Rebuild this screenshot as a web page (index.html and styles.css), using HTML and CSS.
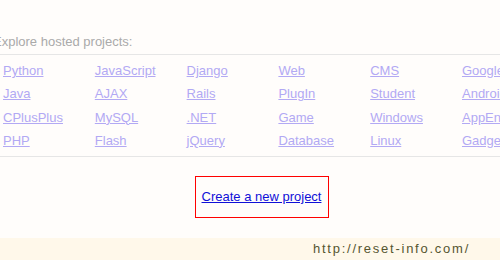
FILE: index.html
```html
<!DOCTYPE html>
<html lang="en">
<head>
    <meta charset="UTF-8">
    <title>Explore hosted projects</title>
    <link rel="stylesheet" href="styles.css">
</head>
<body>
<div class="page">
    <p class="explore">Explore hosted projects:</p>
    <ul class="labels">
        <li><a href="#">Python</a></li>
        <li><a href="#">JavaScript</a></li>
        <li><a href="#">Django</a></li>
        <li><a href="#">Web</a></li>
        <li><a href="#">CMS</a></li>
        <li><a href="#">Google</a></li>
        <li><a href="#">Java</a></li>
        <li><a href="#">AJAX</a></li>
        <li><a href="#">Rails</a></li>
        <li><a href="#">PlugIn</a></li>
        <li><a href="#">Student</a></li>
        <li><a href="#">Android</a></li>
        <li><a href="#">CPlusPlus</a></li>
        <li><a href="#">MySQL</a></li>
        <li><a href="#">.NET</a></li>
        <li><a href="#">Game</a></li>
        <li><a href="#">Windows</a></li>
        <li><a href="#">AppEngine</a></li>
        <li><a href="#">PHP</a></li>
        <li><a href="#">Flash</a></li>
        <li><a href="#">jQuery</a></li>
        <li><a href="#">Database</a></li>
        <li><a href="#">Linux</a></li>
        <li><a href="#">Gadget</a></li>
    </ul>
    <div class="create">
        <a href="#">Create a new project</a>
    </div>
</div>
<div class="footer">http://reset-info.com/</div>
</body>
</html>
```
FILE: styles.css
```css
*{
    margin: 0;
    padding: 0;
    list-style: none;
}

body{
    width: 500px;
    height: 260px;
    overflow: hidden;
    background-color: #fffdfb;
    font-family: "Liberation Sans", Arial, sans-serif;
    font-size: 13px;
}

.page{
    height: 238px;
    overflow: hidden;
}

.explore{
    color: #aaa;
    line-height: 15px;
    padding-top: 34px;
    margin-left: -7px;
    white-space: nowrap;
}

.labels{
    margin-top: 5px;
    border-top: 1px solid #e6e6e6;
    border-bottom: 1px solid #e6e6e6;
    display: grid;
    grid-template-columns: repeat(6, 91.8px);
    padding: 8px 0 0 3px;
    white-space: nowrap;
}

.labels li{
    height: 23.3px;
    line-height: 15px;
}

.labels a{
    color: #b2a9f4;
}

.create{
    display: flex;
    justify-content: center;
    margin-top: 19px;
}

.create a{
    display: block;
    margin-left: 23px;
    border: 1px solid #f00;
    width: 132px;
    height: 40px;
    line-height: 40px;
    text-align: center;
    color: #1010d8;
}

.footer{
    height: 22px;
    line-height: 22px;
    background-color: #fff8ea;
    color: #555530;
    padding-left: 313px;
    letter-spacing: 1.75px;
}
```
